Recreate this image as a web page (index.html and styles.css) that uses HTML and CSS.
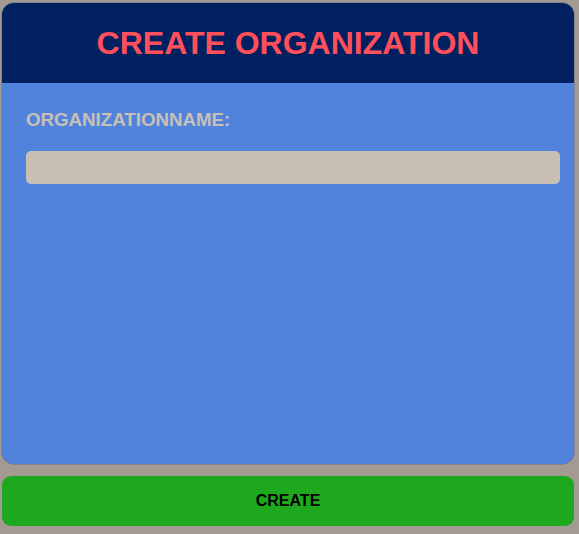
FILE: index.html
```html
<!DOCTYPE html>
<html>
<head>
<meta charset="utf-8">
<link rel="stylesheet" href="styles.css">
</head>
<body>
<div class="page">
  <div class="card">
    <div class="card-header">
      <h1 class="title">CREATE ORGANIZATION</h1>
    </div>
    <div class="card-body">
      <label class="label">ORGANIZATIONNAME:</label>
      <input class="input" type="text">
    </div>
  </div>
  <button class="btn">CREATE</button>
</div>
</body>
</html>
```
FILE: styles.css
```css
html, body {
  margin: 0;
  padding: 0;
  background: #a39a91;
  font-family: "Liberation Sans", Arial, sans-serif;
}
.page {
  width: 572px;
  padding: 3px 0 0 2px;
  display: flex;
  flex-direction: column;
  gap: 12px;
}
.card {
  height: 461px;
  background: #5283dc;
  border-radius: 12px;
  overflow: hidden;
  box-shadow: 0 0 0 0.5px rgba(40, 60, 120, 0.5);
  display: flex;
  flex-direction: column;
}
.card-header {
  height: 80px;
  background: #002060;
  display: flex;
  align-items: center;
  justify-content: center;
}
.title {
  margin: 0;
  font-size: 32px;
  font-weight: bold;
  color: #ff4f5a;
}
.card-body {
  padding: 26px 24px 0 24px;
  display: flex;
  flex-direction: column;
}
.label {
  font-size: 18.72px;
  font-weight: bold;
  color: #c9c0b5;
  line-height: 22px;
}
.input {
  margin-top: 20px;
  width: 534px;
  height: 33px;
  box-sizing: border-box;
  border: none;
  border-radius: 5px;
  background: #c9c0b5;
}
.btn {
  height: 50px;
  border: none;
  border-radius: 9px;
  background: #1ea81e;
  color: #000;
  font-family: "Liberation Sans", Arial, sans-serif;
  font-size: 16px;
  font-weight: bold;
}
```
